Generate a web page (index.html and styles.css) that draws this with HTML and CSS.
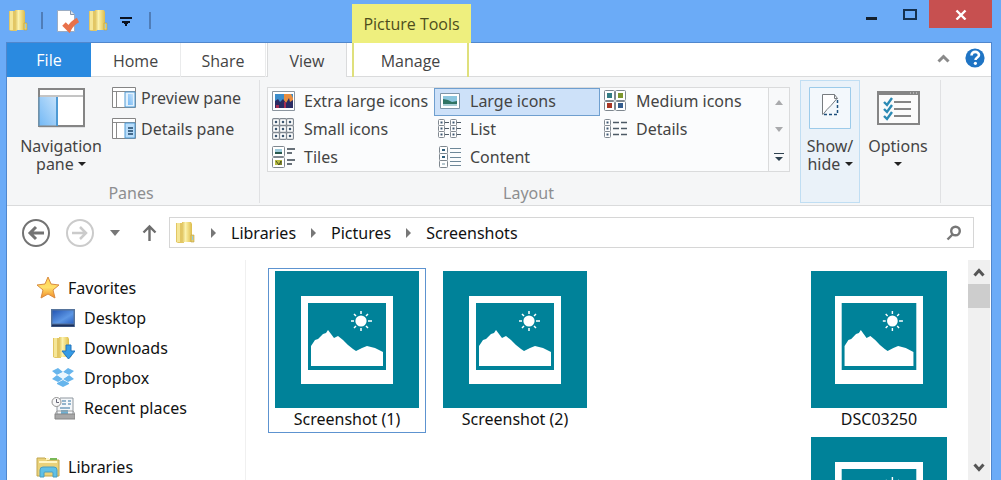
FILE: index.html
```html
<!DOCTYPE html>
<html lang="en">
<head>
<meta charset="utf-8">
<title>Screenshots</title>
<link rel="stylesheet" href="styles.css">
</head>
<body>
<svg class="defs" aria-hidden="true">
  <defs>
    <linearGradient id="gold" x1="0" x2="1" y1="0" y2="0"><stop offset="0" stop-color="#dfc25c"/><stop offset=".35" stop-color="#fbf2ae"/><stop offset=".6" stop-color="#f2de84"/><stop offset="1" stop-color="#dcbc4c"/></linearGradient>
    <linearGradient id="pane" x1="0" x2="1" y1="1" y2="0"><stop offset="0" stop-color="#74b9f5"/><stop offset="1" stop-color="#c4e1fb"/></linearGradient>
    <linearGradient id="screen" x1="0" x2="1" y1="0" y2="1"><stop offset="0" stop-color="#2456b4"/><stop offset=".6" stop-color="#5d97e4"/><stop offset="1" stop-color="#2b62c4"/></linearGradient>
    <linearGradient id="star" x1="0" x2="0" y1="0" y2="1"><stop offset="0" stop-color="#ffd24d"/><stop offset=".5" stop-color="#ffe06a"/><stop offset="1" stop-color="#f28c28"/></linearGradient>
    <symbol id="folder" viewBox="0 0 20 24">
      <path d="M1 2h8v20H3l-2-1z" fill="#e2c664"/><path d="M2 2h3v19H2z" fill="#f5e697"/>
      <path d="M7 1h9l1 2v18H9l-2 1z" fill="url(#gold)"/><path d="M16 14h3v7h-3z" fill="#e6cf72" stroke="#c0a342" stroke-width=".6"/><path d="M17.500 15v4" stroke="#8fcbe6"/>
    </symbol>
    <symbol id="photo" viewBox="0 0 92 88" preserveAspectRatio="none">
      <path d="M0 0h92v88H0z" fill="#fff"/><path d="M7 7h78v67H7z" fill="#008299"/>
      <path d="M10 70V50l4-6 3-1 5-5 3-1 2-3 3 4 3 4 4-2 5 4 5 5 5 4 3 2 6-3 5-2 8 2 8 4v14z" fill="#fff"/>
      <circle cx="60" cy="25" r="5.600" fill="#fff"/>
      <path d="M60 15v3M60 32v3M50 25h3M67 25h4M53 18l2 2M65 30l2 2M67 18l-2 2M55 30l-2 2" stroke="#fff" stroke-width="1.500"/>
    </symbol>
    <symbol id="cell" viewBox="0 0 7 7"><rect x=".5" y=".5" width="6" height="6" rx="1" fill="#fff" stroke="#808890"/><path d="M2.500 2.500h2v2h-2z" fill="#3c5670"/></symbol>
  </defs>
</svg>
<div class="window">
  <header class="titlebar">
    <div class="quick">
      <button class="plain" aria-label="Window menu"><svg width="20" height="24"><use href="#folder"/></svg></button>
      <span class="divider"></span>
      <button class="plain" aria-label="Properties"><svg width="24" height="24" viewBox="0 0 24 24"><path d="M1.500 1.500h13l4 4v17h-17z" fill="#fff" stroke="#9badc4"/><path d="M14.500 1.500v4h4" fill="#dbe4ef" stroke="#8595ac"/><path d="M8 15l5 5q3-6 9-9" fill="none" stroke="#e8714a" stroke-width="5"/></svg></button>
      <button class="plain" aria-label="New folder"><svg width="20" height="24"><use href="#folder"/></svg></button>
      <button class="plain customize" aria-label="Customize toolbar"><svg width="12" height="12" viewBox="0 0 12 12"><path d="M0 2h12v2H0zM2 6h8v2H8v1H7v2H5V9H4V8H2z" fill="#0b1220"/></svg></button>
      <span class="divider"></span>
    </div>
    <div class="context">Picture Tools</div>
    <div class="controls">
      <button class="ctl" aria-label="Minimize"><svg width="14" height="14" viewBox="0 0 14 14"><path d="M2 10h11v3H2z" fill="#14202e"/></svg></button>
      <button class="ctl" aria-label="Maximize"><svg width="16" height="14" viewBox="0 0 16 14"><path d="M2 3h12v9H2z" fill="none" stroke="#14304e" stroke-width="2"/></svg></button>
      <button class="ctl close" aria-label="Close"><svg width="12" height="12" viewBox="0 0 12 12"><path d="M1.500 2.500l9 9M10.500 2.500l-9 9" stroke="#fff" stroke-width="2.400"/></svg></button>
    </div>
  </header>
  <nav class="tabs" aria-label="Ribbon tabs">
    <button class="tab file">File</button>
    <button class="tab home">Home</button>
    <button class="tab share">Share</button>
    <button class="tab view">View</button>
    <button class="tab manage">Manage</button>
    <span class="tab-tools">
      <button class="plain" aria-label="Minimize the ribbon"><svg width="13" height="10" viewBox="0 0 13 10"><path d="M1.500 8.500l5-5 5 5" fill="none" stroke="#8a8a8a" stroke-width="3"/></svg></button>
      <button class="plain" aria-label="Help"><svg width="20" height="20" viewBox="0 0 20 20"><circle cx="10" cy="10" r="9.600" fill="#1f74c4"/><path d="M6.500 7.500c0-5 7.500-4.500 7.500-.5 0 2.500-3.500 2.500-3.500 5" fill="none" stroke="#fff" stroke-width="2.600"/><circle cx="10.400" cy="15.300" r="1.600" fill="#fff"/></svg></button>
    </span>
  </nav>
  <section class="ribbon" aria-label="View">
    <div class="group panes">
      <div class="group-body">
        <button class="big nav-pane">
          <span class="big-icon"><svg width="47" height="40" viewBox="0 0 47 40"><path d="M1 38h46" stroke="#c8cacd" stroke-width="3"/><path d="M1 1h45v37H1z" fill="#fff" stroke="#858585" stroke-width="2"/><path d="M1 8h45" stroke="#8a8a8a"/><path d="M1.500 9h17v28.500h-17z" fill="url(#pane)"/><path d="M19 9v29" stroke="#4e9ad4" stroke-width="2"/><path d="M1 9v29" stroke="#5b9ccc"/></svg></span>
          <span>Navigation<br>pane <i class="caret"></i></span>
        </button>
        <div class="small-stack">
          <button class="small"><svg width="24" height="21" viewBox="0 0 24 21"><path d="M.5.5h23v20H.5z" fill="#fff" stroke="#858585"/><path d="M1 4.500h22M4.500 4.500v16" stroke="#8a8a8a"/><path d="M13 5h10v15H13z" fill="#e2f1fd" stroke="#4e9ad4"/><path d="M16 7h5v11h-5z" fill="url(#pane)"/></svg>Preview pane</button>
          <button class="small"><svg width="24" height="21" viewBox="0 0 24 21"><path d="M.5.5h23v20H.5z" fill="#fff" stroke="#858585"/><path d="M1 4.500h22M4.500 4.500v16" stroke="#8a8a8a"/><path d="M13 5h10v15H13z" fill="#b9ddfa" stroke="#4e9ad4"/><path d="M16 10h5M16 13h5M16 16h5" stroke="#1d4468" stroke-width="1.400"/></svg>Details pane</button>
        </div>
      </div>
      <div class="group-label">Panes</div>
    </div>
    <div class="group layout">
      <div class="gallery">
        <div class="options">
          <button class="opt"><svg width="24" height="20" viewBox="0 0 24 20"><path d="M.5.500h22v19H.5z" fill="#fff" stroke="#8b959f"/><path d="M3 3h18v14H3z" fill="#3d8dca"/><path d="M12 3h7l2 4v10H12z" fill="#e88d3f"/><path d="M3 10l3-2 2 3 3-3 3 4 3-5 1 4 3-2v8H3z" fill="#2b2c63"/><path d="M4 14h3v3H4zM12 11h2v6h-2z" fill="#a52e54"/></svg>Extra large icons</button>
          <button class="opt selected"><svg width="24" height="20" viewBox="0 0 24 20"><path d="M2.500 2.500h19v15h-19z" fill="#fff" stroke="#7e95a8"/><path d="M5 5h14v10H5z" fill="#8cc6de"/><path d="M5 8l5 1 4 2 5-1v5H5z" fill="#2e7362"/><path d="M5 13h14v2H5z" fill="#a9cdd5"/></svg>Large icons</button>
          <button class="opt"><svg width="24" height="22" viewBox="0 0 24 22"><g fill="#fff" stroke="#7e878f"><rect x=".5" y=".5" width="10" height="10" rx="1"/><rect x="11.500" y=".5" width="10" height="10" rx="1"/><rect x=".5" y="11.500" width="10" height="9" rx="1"/><rect x="11.500" y="11.500" width="10" height="9" rx="1"/></g><path d="M3 3h5v5H3z" fill="#337c85"/><path d="M14 3h5v5h-5z" fill="#7d962d"/><path d="M3 13h5v5H3z" fill="#aa3524"/><path d="M14 13h5v5h-5z" fill="#335c8e"/></svg>Medium icons</button>
          <button class="opt"><svg width="24" height="22" viewBox="0 0 24 22"><use href="#cell" x="0" y="0" width="8" height="8"/><use href="#cell" x="7" y="0" width="8" height="8"/><use href="#cell" x="14" y="0" width="8" height="8"/><use href="#cell" x="0" y="7" width="8" height="8"/><use href="#cell" x="7" y="7" width="8" height="8"/><use href="#cell" x="14" y="7" width="8" height="8"/><use href="#cell" x="0" y="14" width="8" height="8"/><use href="#cell" x="7" y="14" width="8" height="8"/><use href="#cell" x="14" y="14" width="8" height="8"/></svg>Small icons</button>
          <button class="opt"><svg width="24" height="20" viewBox="0 0 24 20"><use href="#cell" x="0" y="0" width="7" height="7"/><use href="#cell" x="0" y="6" width="7" height="7"/><use href="#cell" x="0" y="12" width="7" height="7"/><use href="#cell" x="12" y="0" width="7" height="7"/><use href="#cell" x="12" y="6" width="7" height="7"/><use href="#cell" x="12" y="12" width="7" height="7"/><path d="M7 3.500h4M7 9.500h4M7 15.500h4M19 3.500h4M19 9.500h4M19 15.500h4" stroke="#4d5a66"/></svg>List</button>
          <button class="opt"><svg width="24" height="20" viewBox="0 0 24 20"><use href="#cell" x="0" y="0" width="7" height="7"/><use href="#cell" x="0" y="6" width="7" height="7"/><use href="#cell" x="0" y="12" width="7" height="7"/><path d="M9 3.500h6M17 3.500h6M9 9.500h6M17 9.500h6M9 15.500h6M17 15.500h6" stroke="#4d5a66" stroke-width="1.400"/></svg>Details</button>
          <button class="opt"><svg width="24" height="22" viewBox="0 0 24 22"><g fill="#fff" stroke="#7e878f"><rect x=".5" y=".5" width="12" height="10" rx="1"/><rect x=".5" y="11.500" width="12" height="10" rx="1"/></g><path d="M3 3h7v5H3z" fill="#9ccada"/><path d="M3 6h7v2H3z" fill="#27584d"/><path d="M3 14h7v5H3z" fill="#b8bd42"/><path d="M4 15l3 4 2-4v4" fill="none" stroke="#444b22"/><path d="M15 3h8M15 7h5M15 14h8M15 18h5" stroke="#39434d" stroke-width="1.500"/></svg>Tiles</button>
          <button class="opt"><svg width="24" height="22" viewBox="0 0 24 22"><g fill="#fff" stroke="#7e878f"><rect x="1.500" y=".5" width="8" height="7" rx="1"/><rect x="1.500" y="7.500" width="8" height="7" rx="1"/><rect x="1.500" y="14.500" width="8" height="7" rx="1"/></g><path d="M4 3h3v2H4zM4 10h3v2H4z" fill="#2f5f7c"/><path d="M4 18h3" stroke="#6d8f9f"/><path d="M12 2.500h11M12 6.500h11M12 11.500h11M12 15.500h11M12 19.500h11" stroke="#6d8798"/></svg>Content</button>
        </div>
        <div class="gallery-scroll">
          <button class="plain" aria-label="Scroll up"><svg width="10" height="8" viewBox="0 0 10 8"><path d="M1 7l4-5 4 5z" fill="#a9aaac"/></svg></button>
          <button class="plain" aria-label="Scroll down"><svg width="10" height="8" viewBox="0 0 10 8"><path d="M1 1l4 5 4-5z" fill="#a9aaac"/></svg></button>
          <button class="plain" aria-label="More layouts"><svg width="10" height="10" viewBox="0 0 10 10"><path d="M0 0h10v1H0zM1 4h8L5 8z" fill="#2f4250"/></svg></button>
        </div>
      </div>
      <div class="group-label">Layout</div>
    </div>
    <div class="group tools">
      <button class="big show">
        <span class="big-icon"><svg width="42" height="42" viewBox="0 0 42 42"><path d="M.5.500h41v41H.5z" fill="#f3f8fc" stroke="#9ccbea"/><path d="M13.500 27V7.500h12l3 3z" fill="#fff"/><path d="M13.500 27.500v-20h12l3 4M14 27.500l4-5 4-4 6-7M25.500 7.500v4h3" fill="none" stroke="#777c80"/><path d="M28.500 13v14.500H15" fill="none" stroke="#1e4f7c" stroke-width="1.500" stroke-dasharray="3 2"/></svg></span>
        <span>Show/<br>hide <i class="caret"></i></span>
      </button>
      <button class="big opts">
        <span class="big-icon"><svg width="43" height="34" viewBox="0 0 43 34"><path d="M1 1h41v32H1z" fill="#fbfbfb" stroke="#858585" stroke-width="2"/><path d="M0 0h43v4H0z" fill="#858585"/><path d="M33 2h1M36 2h1M39 2h1" stroke="#ddd"/><path d="M7 11l3 3 5-7M7 18l3 3 5-7M7 25l3 3 5-7" fill="none" stroke="#2c8bb5" stroke-width="2.400"/><path d="M17 11h17M17 18h17M17 25h17" stroke="#858585" stroke-width="2"/></svg></span>
        <span>Options<br><i class="caret"></i></span>
      </button>
    </div>
  </section>
  <div class="address-row">
    <button class="plain" aria-label="Back"><svg width="30" height="30" viewBox="0 0 30 30"><circle cx="15" cy="15" r="13" fill="none" stroke="#737373" stroke-width="2"/><path d="M23 15H9M15 9l-6 6 6 6" fill="none" stroke="#737373" stroke-width="3"/></svg></button>
    <button class="plain" aria-label="Forward"><svg width="30" height="30" viewBox="0 0 30 30"><circle cx="15" cy="15" r="13" fill="none" stroke="#cbcbcb" stroke-width="2"/><path d="M7 15h14M15 9l6 6-6 6" fill="none" stroke="#cbcbcb" stroke-width="2.500"/></svg></button>
    <button class="plain recent" aria-label="Recent locations"><svg width="10" height="6" viewBox="0 0 10 6"><path d="M0 0h10L5 6z" fill="#777"/></svg></button>
    <button class="plain" aria-label="Up"><svg width="15" height="18" viewBox="0 0 15 18"><path d="M7.500 17V2.500M1.500 8.500l6-6 6 6" fill="none" stroke="#6d6d6d" stroke-width="2.400"/></svg></button>
    <div class="address">
      <svg width="22" height="24"><use href="#folder"/></svg>
      <i class="chev"></i><a href="#libraries">Libraries</a>
      <i class="chev"></i><a href="#pictures">Pictures</a>
      <i class="chev"></i><a href="#screenshots">Screenshots</a>
      <button class="plain search" aria-label="Search"><svg width="16" height="16" viewBox="0 0 16 16"><circle cx="9.500" cy="6" r="4.300" fill="none" stroke="#777" stroke-width="2.400"/><path d="M6.500 9.500l-5 5" stroke="#777" stroke-width="2.400"/></svg></button>
    </div>
  </div>
  <main class="content">
    <nav class="sidebar" aria-label="Folders">
      <a class="root" href="#favorites"><svg width="24" height="24" viewBox="0 0 24 24"><path d="M12 1l3 7 8 1-6 5 2 8-7-4-7 4 2-8-6-5 8-1z" fill="url(#star)" stroke="#d98b40"/></svg>Favorites</a>
      <a class="leaf" href="#desktop"><svg width="24" height="24" viewBox="0 0 24 24"><path d="M0 3h24v18H0z" fill="#56749c"/><path d="M1.500 4.500h21v13h-21z" fill="url(#screen)"/><path d="M1 18.500h22v2H1z" fill="#1c315f"/></svg>Desktop</a>
      <a class="leaf" href="#downloads"><svg width="24" height="24" viewBox="0 0 24 24"><use href="#folder" x="1" y="0" width="20" height="24"/><path d="M15 9h5v6h4l-6.500 8L11 15h4z" fill="#359be6" stroke="#2477bd"/></svg>Downloads</a>
      <a class="leaf" href="#dropbox"><svg width="24" height="24" viewBox="0 0 24 24"><g fill="#67b5ec"><path d="M1 5l6-3 5 4-6 3zM23 5l-6-3-5 4 6 3zM1 13l5-4 6 4-5 3zM23 13l-5-4-6 4 5 3zM6 17l6-3 6 3v1l-6 3-6-3z"/></g><path d="M6 9l6-3 6 3-6 4z" fill="#eaf6fe"/></svg>Dropbox</a>
      <a class="leaf" href="#recent"><svg width="24" height="24" viewBox="0 0 24 24"><path d="M9 2h13v17H6V9z" fill="#f4f7fa" stroke="#8f979e"/><path d="M11 5h4M17 5h3M11 8h4M17 8h3M9 12h10" stroke="#739ebd" stroke-width="1.500"/><path d="M10 14h7v4h-7z" fill="#6fb0d3"/><path d="M4 18h20v5H4z" fill="#a7a7a7" stroke="#858585"/><path d="M4 18l2-3h16l2 3" fill="none" stroke="#9b9b9b"/><circle cx="5.500" cy="6" r="4.500" fill="#f8f8f8" stroke="#929292"/><path d="M5.500 3v3.500H8" fill="none" stroke="#667"/></svg>Recent places</a>
      <a class="root libs" href="#libraries"><svg width="24" height="24" viewBox="0 0 24 24"><path d="M1 3h8l2 2h12v16H1z" fill="#ead27a" stroke="#c2a64e"/><path d="M3 7h18M10 4h3" stroke="#fff6c4" stroke-width="2"/><path d="M14 4h7" stroke="#78b857" stroke-width="2"/><path d="M4 22v-7q0-3 3-3h11q3 0 3 3v7h-4v-4q0-1-1-1H9q-1 0-1 1v4z" fill="#5fc0e6" stroke="#4a9dc0"/></svg>Libraries</a>
    </nav>
    <div class="files">
      <a class="item selected" href="#s1"><span class="thumb"><svg width="92" height="88"><use href="#photo"/></svg></span>Screenshot (1)</a>
      <a class="item" href="#s2"><span class="thumb"><svg width="92" height="88"><use href="#photo"/></svg></span>Screenshot (2)</a>
      <div class="last-column">
        <a class="item" href="#d1"><span class="thumb"><svg width="88" height="88"><use href="#photo"/></svg></span>DSC03250</a>
        <a class="item" href="#d2"><span class="thumb"><svg width="88" height="88"><use href="#photo"/></svg></span></a>
      </div>
    </div>
    <div class="scrollbar">
      <button class="plain" aria-label="Scroll files up"><svg width="12" height="10" viewBox="0 0 12 10"><path d="M1.500 8.500L6 3.500l4.500 5" fill="none" stroke="#555" stroke-width="3"/></svg></button>
      <span class="thumbbar"></span>
      <button class="plain down" aria-label="Scroll files down"><svg width="12" height="10" viewBox="0 0 12 10"><path d="M1.500 1.500L6 6.500l4.500-5" fill="none" stroke="#555" stroke-width="3"/></svg></button>
    </div>
  </main>
</div>
</body>
</html>
```
FILE: styles.css
```css
* { box-sizing: border-box; }
body { margin: 0; font: 16px/18px "Noto Sans", "Open Sans", sans-serif; color: #111; }
button { font: inherit; color: inherit; border: 0; margin: 0; padding: 0; background: none; }
a { color: inherit; text-decoration: none; }
svg { display: block; flex: none; }
.defs { position: absolute; width: 0; height: 0; }
.plain { display: flex; align-items: center; justify-content: center; }

.window { display: flex; flex-direction: column; height: 100vh; overflow: hidden; padding: 0 9px 0 6px; background: #6babf7; }
.titlebar { display: flex; flex: none; height: 43px; border-bottom: 1px solid #5087cd; }
.quick { display: flex; flex: none; align-items: center; gap: 8px; width: 346px; height: 41px; padding-left: 2px; }
.divider { width: 2px; height: 17px; margin: 0 5px; background: #4f7db8; }
.customize { padding: 0 4px; }
.context { flex: none; align-self: flex-end; width: 119px; height: 39px; margin-bottom: -1px; background: #eeef7e; color: #4d4d1c; font-family: "Open Sans", sans-serif; line-height: 40px; text-align: center; }
.controls { display: flex; flex: none; height: 28px; margin-left: auto; }
.ctl { display: flex; width: 39px; align-items: center; justify-content: center; }
.ctl.close { width: 63px; background: #c75050; }

.tabs { display: flex; flex: none; height: 34px; background: #fff; border-left: 1px solid #5087cd; border-right: 1px solid #5087cd; box-shadow: inset 0 -1px #dadbdc; color: #444; font-family: "Open Sans", sans-serif; }
.tab { line-height: 36px; border-right: 1px solid #eaebec; }
.file { width: 84px; background: #2a8ae0; color: #fff; line-height: 34px; border: 0; }
.home { width: 90px; }
.share { width: 85px; }
.view { width: 80px; margin-left: 1px; background: #f5f6f7; border: 1px solid #dadbdc; border-width: 0 1px; }
.manage { width: 117px; margin-left: 5px; border: 2px solid #dfe07c; border-width: 0 2px; }
.tab-tools { display: flex; align-items: center; gap: 15px; margin-left: auto; padding: 0 6px 4px 0; }

.ribbon { display: flex; flex: none; padding: 3px 0; background: #f5f6f7; border: 1px solid #5087cd; border-width: 0 1px; box-shadow: inset 0 -1px #dadbdc; color: #444; }
.group { display: flex; flex: none; flex-direction: column; }
.group-body { display: flex; }
.group-label { margin-top: auto; padding-bottom: 1px; color: #8d8e90; text-align: center; }
.panes { width: 253px; border-right: 1px solid #e0e1e3; }
.panes .group-label { padding-right: 4px; }
.layout { padding: 7px 9px 0 7px; }
.tools { flex-direction: row; padding: 0 12px 0 1px; border-right: 1px solid #e0e1e3; }
.big { display: flex; flex-direction: column; align-items: center; padding-top: 7px; white-space: nowrap; }
.big-icon { display: flex; align-items: center; height: 42px; margin-bottom: 8px; }
.nav-pane { width: 84px; margin-left: 12px; }
.small-stack { display: flex; flex-direction: column; gap: 10px; padding: 7px 0 0 9px; }
.small { display: flex; align-items: center; gap: 5px; height: 21px; }
.show { width: 60px; height: 123px; padding-top: 6px; border: 1px solid #c0def3; background: #eaf2f9; }
.opts { width: 60px; margin-left: 8px; }
.caret { display: inline-block; border: 4px solid transparent; border-top-color: #222; border-bottom: 0; vertical-align: 4px; }

.gallery { display: flex; height: 85px; border: 1px solid #dadbdc; background: #fbfcfd; }
.options { display: grid; grid-template-columns: 166px 166px 168px; grid-auto-rows: 28px; }
.opt { display: flex; align-items: center; gap: 8px; padding: 0 0 2px 3px; border: 1px solid transparent; white-space: nowrap; }
.opt.selected { background: #cde1f9; border-color: #6f9fcf; }
.gallery-scroll { display: grid; grid-auto-rows: 28px; width: 21px; border-left: 1px solid #dadbdc; background: #f8f9fa; }

.address-row { display: flex; flex: none; align-items: center; gap: 14px; padding: 11px 17px 12px 14px; background: #fff; border: 1px solid #5087cd; border-width: 0 1px; }
.recent { margin: 0 8px 0 1px; }
.address { display: flex; flex: 1; align-items: center; gap: 15px; height: 31px; margin-left: -2px; padding: 0 11px 0 4px; border: 1px solid #d6d6d6; }
.chev { border: 5px solid transparent; border-left-color: #777; border-right: 0; }
.search { margin-left: auto; }

.content { display: flex; flex: 1; min-height: 0; background: #fff; border: 1px solid #5087cd; border-width: 0 1px; }
.sidebar { flex: none; width: 239px; padding-top: 13px; border-right: 1px solid #f0f0f0; }
.sidebar a { display: flex; align-items: center; gap: 8px; height: 30px; padding-left: 29px; }
.sidebar .leaf { padding-left: 44px; gap: 9px; }
.sidebar .libs { margin-top: 29px; }
.files { display: flex; flex: 1; align-items: flex-start; gap: 10px; padding: 8px 14px 0 22px; overflow: hidden; }
.item { display: flex; flex-direction: column; width: 158px; height: 165px; padding: 2px 6px 0; border: 1px solid transparent; text-align: center; line-height: 22px; }
.item.selected { border-color: #5d93d0; }
.thumb { display: flex; align-items: center; justify-content: center; height: 137px; background: #008299; }
.last-column { width: 150px; margin-left: auto; }
.last-column .item { width: 150px; }
.last-column .item + .item { margin-top: 1px; }
.scrollbar { display: flex; flex: none; flex-direction: column; width: 22px; margin-right: 1px; background: #f0f0f0; }
.scrollbar .plain { height: 24px; }
.thumbbar { height: 24px; background: #cdcdcd; }
.scrollbar .down { margin-top: auto; }
```
